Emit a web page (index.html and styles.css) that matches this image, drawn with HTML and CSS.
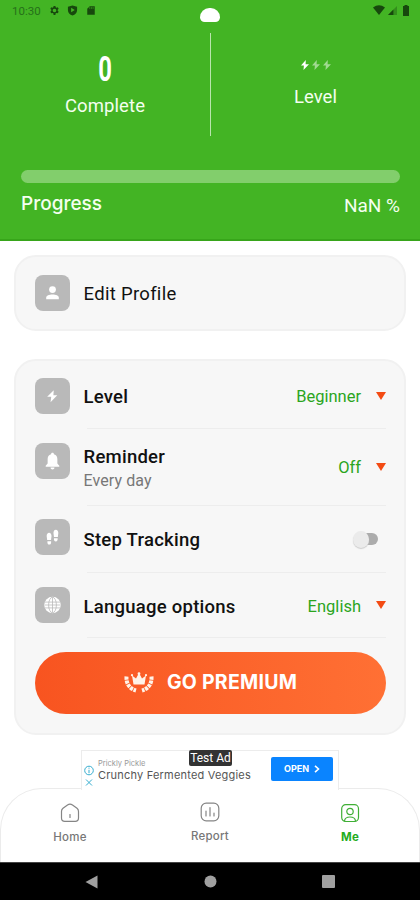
FILE: index.html
```html
<!DOCTYPE html>
<html lang="en">
<head>
<meta charset="utf-8">
<meta name="viewport" content="width=device-width, initial-scale=1">
<title>Me</title>
<link rel="stylesheet" href="styles.css">
</head>
<body>
<div class="phone">
  <header class="header">
    <div class="status">
      <span class="time">10:30</span>
      <svg class="st-icon" viewBox="0 0 24 24"><path fill-rule="evenodd" d="M10 2h4l.6 2.8 1.8 1 2.7-.9 2 3.5-2.1 1.9v2.4l2.1 1.9-2 3.5-2.7-.9-1.8 1L14 22h-4l-.6-3.800-1.800-1-2.700.9-2-3.500L5 12.700v-2.400L2.900 8.400l2-3.500 2.700.9 1.800-1zM12 8a4 4 0 1 0 0 8 4 4 0 0 0 0-8z"/></svg>
      <svg class="st-icon shield" viewBox="0 0 24 24"><path fill-rule="evenodd" d="M12 1l10 3v7c0 6-4 10-10 12C6 21 2 17 2 11V4zM9 6v10l8-5z"/></svg>
      <svg class="st-icon card-icon" viewBox="0 0 24 24"><path d="M9 2h12v20H3V8z"/><path class="slots" d="M9 4v4M13 4v4M17 4v4"/></svg>
      <span class="cutout"></span>
      <span class="st-right">
        <svg class="wifi" viewBox="0 0 12 10"><path d="M0 2.500Q6-2 12 2.500L6 10z"/></svg>
        <svg class="signal" viewBox="0 0 10 10"><path class="faint" d="M0 10L10 0v10z"/><path d="M0 10l6-6v6z"/></svg>
        <svg class="battery" viewBox="0 0 6 11"><path d="M0 1h1.500V0h3v1H6v10H0z"/></svg>
      </span>
    </div>
    <div class="stats">
      <div class="stat">
        <div class="count">0</div>
        <div class="stat-label complete">Complete</div>
      </div>
      <div class="rule"></div>
      <div class="stat">
        <div class="bolts">
          <svg viewBox="0 0 8 10"><path d="M4.800 0L0 5.600h2.900L2.500 10 8 4.200H4.600z"/></svg>
          <svg class="dim" viewBox="0 0 8 10"><path d="M4.800 0L0 5.600h2.900L2.500 10 8 4.200H4.600z"/></svg>
          <svg class="dim" viewBox="0 0 8 10"><path d="M4.800 0L0 5.600h2.900L2.500 10 8 4.200H4.600z"/></svg>
        </div>
        <div class="stat-label">Level</div>
      </div>
    </div>
    <div class="track"></div>
    <div class="progress"><span class="progress-name">Progress</span><span class="progress-value">NaN %</span></div>
  </header>

  <main class="main">
    <section class="card profile">
      <span class="tile"><svg viewBox="0 0 36 36"><circle cx="18" cy="14.500" r="3.500"/><path d="M11.500 24.500v-1.500c0-2.500 3-3.500 6.500-3.500s6.500 1 6.500 3.500v1.500z"/></svg></span>
      <span class="title edit">Edit Profile</span>
    </section>

    <section class="card settings">
      <div class="row level">
        <span class="tile"><svg viewBox="0 0 36 36"><path d="M19.300 12L12.500 18.700h4.200L16 24.500l6.900-7.200h-4z"/></svg></span>
        <span class="title">Level</span>
        <span class="value beginner">Beginner</span><i class="caret"></i>
      </div>
      <div class="row reminder">
        <span class="tile"><svg viewBox="0 0 36 36"><path d="M18 9.500c1 0 1.500.7 1.500 1.500 2.500.7 3.500 2.700 3.500 5v4.500l2 2.500v.8H11V23l2-2.500V16c0-2.300 1-4.300 3.500-5 0-.8.500-1.500 1.500-1.500zM16 24.800h4c0 1.500-1 2-2 2s-2-.5-2-2z"/></svg></span>
        <span class="title">Reminder<small>Every day</small></span>
        <span class="value">Off</span><i class="caret"></i>
      </div>
      <div class="row steps">
        <span class="tile"><svg viewBox="0 0 36 36"><path d="M12.500 21l-.5-4c0-2 1-3.500 2.500-3.500s2.500 1.300 2.500 3.500l-.5 4zM12.800 22.300h3.800c.2 2-.4 3.500-1.900 3.500s-2.200-1.500-1.900-3.500zM19.500 18l-.5-4c0-2.300 1-3.500 2.500-3.500S24 12 24 14l-.5 4zM19.500 19.200h3.800c.2 2-.4 3.300-1.900 3.300s-2.200-1.300-1.900-3.300z"/></svg></span>
        <span class="title">Step Tracking</span>
        <span class="switch"><i></i></span>
      </div>
      <div class="row language">
        <span class="tile"><svg viewBox="0 0 36 36"><circle cx="18" cy="18" r="8.500"/><g class="mesh"><ellipse cx="18" cy="18" rx="4" ry="8"/><path d="M18 10v16M10 15h16M10 21h16M10 18h16"/></g></svg></span>
        <span class="title">Language options</span>
        <span class="value english">English</span><i class="caret"></i>
      </div>
      <div class="premium">
        <svg viewBox="0 0 30 20"><path d="M9.500 12.500L8 3.500l4 3L15 1l3 5.500 4-3-1.500 9z"/><circle cx="15" cy="1.700" r="1.400"/><circle cx="8" cy="3.200" r="1.100"/><circle cx="22" cy="3.200" r="1.100"/><path class="laurel" d="M2.500 4.500C2 11 5 16.500 12 18.500M27.500 4.500C28 11 25 16.500 18 18.500"/></svg>
        <span>GO PREMIUM</span>
      </div>
    </section>

    <aside class="ad">
      <div class="ad-icons">
        <svg viewBox="0 0 10 10"><circle cx="5" cy="5" r="4.300"/><path d="M5 4.300v3.400M5 2.200v1"/></svg>
        <svg viewBox="0 0 10 10"><path d="M2 2l6 6M8 2L2 8"/></svg>
      </div>
      <div class="ad-text"><span class="brand">Prickly Pickle</span><span class="headline">Crunchy Fermented Veggies</span></div>
      <span class="test-ad">Test Ad</span>
      <div class="open">OPEN<svg viewBox="0 0 6 8"><path d="M1 .8L4.500 4 1 7.200"/></svg></div>
    </aside>
  </main>

  <nav class="nav">
    <div class="tab"><svg viewBox="0 0 20 20"><path d="M1.500 8.500Q1.500 6.500 3 5.300L7.500 2Q10 .3 12.500 2L17 5.300Q18.500 6.500 18.500 8.500V15q0 3.300-3.300 3.300H4.800Q1.500 18.300 1.500 15z"/><path d="M10 11.500v3"/></svg><span>Home</span></div>
    <div class="tab report"><svg viewBox="0 0 20 20"><rect x="1.200" y="1.200" width="17.600" height="17.600" rx="5"/><path d="M6 9v5M10 5.500V14M14 11v3"/></svg><span>Report</span></div>
    <div class="tab active"><svg viewBox="0 0 20 20"><rect x="1.700" y="1.700" width="16.800" height="16.800" rx="4"/><circle cx="10" cy="8.500" r="3.200"/><path d="M4.500 18c.3-3 2.500-4 5.500-4s5.200 1 5.500 4"/></svg><span>Me</span></div>
  </nav>
  <div class="system">
    <svg viewBox="0 0 14 14"><path d="M.5 7L12.500.5v13z"/></svg>
    <svg viewBox="0 0 14 14"><circle cx="7.500" cy="6.500" r="6"/></svg>
    <svg viewBox="0 0 14 14"><rect x="1" y="0" width="13" height="13" rx="1"/></svg>
  </div>
</div>
</body>
</html>
```
FILE: styles.css
```css
* { box-sizing: border-box; }
body { margin: 0; background: #fff; font-family: Roboto, sans-serif; }
svg { display: block; flex: none; overflow: visible; }
.phone { width: 420px; height: 900px; display: flex; flex-direction: column; overflow: hidden; }

.header { height: 241px; flex: none; background: #43b424; border-bottom: 2px solid #37a51a; color: #f4fff0; }
.status { height: 22px; padding: 0 11px 0 12px; display: flex; align-items: center; position: relative; }
.status svg { fill: #17480d; }
.time { width: 37px; font-size: 11.5px; line-height: 21px; color: #26701a; }
.st-icon { width: 11px; height: 11px; margin-top: -2px; }
.shield, .card-icon { margin-left: 7px; }
.card-icon { width: 10px; margin-left: 8px; }
.slots { stroke: #43b424; stroke-width: 1.5; }
.cutout { position: absolute; left: 200px; top: 8px; width: 20px; height: 14px; background: #fff; border-radius: 10px 10px 5px 5px; }
.st-right { margin-left: auto; display: flex; align-items: center; gap: 3px; margin-top: -2px; }
.wifi { width: 12px; height: 10px; }
.signal { width: 9px; height: 9px; }
.signal .faint { opacity: .35; }
.battery { width: 6px; height: 11px; margin-left: 3px; }

.stats { height: 148px; display: grid; grid-template-columns: 210px 1px 209px; }
.stat { text-align: center; }
.rule { height: 103px; margin-top: 11px; background: #b9e5ad; }
.count { margin-top: 30px; height: 36px; font-size: 35px; line-height: 36px; font-weight: 700; color: #fff; transform: scaleX(.68); }
.stat-label { font-size: 18.5px; line-height: 24px; }
.complete { margin-top: 6px; letter-spacing: .1px; }
.bolts { display: flex; justify-content: center; gap: 3px; margin-top: 38px; margin-bottom: 15px; }
.bolts svg { width: 8px; height: 10px; fill: #fff; }
.bolts .dim { opacity: .5; }
.track { height: 13px; margin: 0 20px 0 21px; border-radius: 7px; background: #82ce6c; }
.progress { display: flex; justify-content: space-between; padding: 0 20px 0 21px; }
.progress-name { font: 500 19px/24px Inter, sans-serif; margin-top: 9px; }
.progress-value { font-size: 19px; line-height: 24px; margin-top: 11px; }

.main { height: 547px; flex: none; padding: 14px 14px 0; display: flex; flex-direction: column; }
.card { flex: none; background: #f7f7f7; border: 2px solid #f1f1f1; border-radius: 22px; padding: 0 18px 0 19px; }
.profile { height: 76px; display: flex; align-items: center; }
.settings { height: 376px; margin-top: 28px; }
.row { display: flex; align-items: flex-start; position: relative; }
.row::after { content: ""; position: absolute; left: 52px; right: 0; bottom: 0; height: 1px; background: #ededed; }
.tile { width: 35px; height: 36px; flex: none; margin-right: 13.5px; border-radius: 8px; background: #b9b9b9; }
.tile svg { width: 35px; height: 36px; fill: #fff; }
.mesh { fill: none; stroke: #b9b9b9; stroke-width: .8; }
.title { font-size: 18.5px; line-height: 24px; font-weight: 500; letter-spacing: .25px; color: #111; margin-top: 7px; }
.edit { margin-top: 2px; font-weight: 400; letter-spacing: .3px; }
.title small { display: block; font-size: 16px; line-height: 23px; font-weight: 400; letter-spacing: 0.1px; color: #777; }
.value { margin-left: auto; margin-top: 7px; font-size: 16.5px; line-height: 24px; color: #2ba51d; }
.caret { margin: 14px 0 0 15px; border: 5px solid transparent; border-top: 8px solid #f34b13; border-bottom: 0; }
.level { height: 68px; padding-top: 17px; }
.reminder { height: 77px; padding-top: 14px; }
.reminder .title { margin-top: 2px; }
.reminder .value { margin-top: 13px; }
.reminder .caret { margin-top: 20px; }
.steps { height: 67px; padding-top: 13px; }
.steps .title { margin-top: 9px; }
.switch { position: relative; width: 25px; height: 12px; margin: 14px 8px 0 auto; }
.switch::before { content: ""; position: absolute; left: 5px; right: 0; top: 0; height: 12px; border-radius: 6px; background: #acacac; }
.switch i { position: absolute; left: 0; top: -2px; width: 16px; height: 17px; border-radius: 50%; background: #ebebeb; box-shadow: 0 1px 1px #ccc; }
.language { height: 65px; padding-top: 14px; }
.language .title, .language .value { margin-top: 8px; }
.premium { margin-top: 14px; height: 62px; border-radius: 31px; background: linear-gradient(90deg, #f85420, #ff7034); display: flex; align-items: center; justify-content: center; color: #fff; font: 700 19.5px/24px Inter, sans-serif; letter-spacing: .25px; gap: 13px; padding-bottom: 3px; }
.premium svg { width: 30px; height: 20px; fill: #fff3e8; }
.laurel { fill: none; stroke: #fff3e8; stroke-width: 4; stroke-dasharray: 3.200 .8; }

.ad { width: 258px; height: 40px; flex: none; margin: 15px 0 0 67px; border: 1px solid #ececec; border-bottom: 0; display: flex; position: relative; background: #fff; }
.ad-icons { width: 16px; padding: 14px 0 0 2px; }
.ad-icons svg { width: 10px; height: 11px; margin-bottom: 1px; fill: none; stroke: #37aed0; stroke-width: 1; }
.ad-text { font-family: Inter, sans-serif; display: flex; flex-direction: column; padding-top: 8px; white-space: nowrap; }
.brand { font-size: 7.500px; line-height: 9px; color: #999; }
.headline { font-size: 11px; line-height: 14px; color: #555; letter-spacing: .2px; }
.test-ad { position: absolute; left: 107px; top: -1px; width: 43px; height: 16px; background: #333; border-radius: 2px; color: #fff; font-size: 12px; line-height: 16px; text-align: center; }
.open { width: 62px; height: 24px; margin: 6px 5px 0 auto; display: flex; align-items: center; justify-content: center; gap: 5px; background: #0a84ff; border-radius: 2px; color: #fff; font: 700 9px/12px Inter, sans-serif; }
.open svg { width: 6px; height: 8px; fill: none; stroke: #fff; stroke-width: 1.600; }

.nav { height: 74px; flex: none; background: #fff; border: 1px solid #ebebeb; border-bottom: 0; border-radius: 42px 42px 0 0; display: grid; grid-template-columns: repeat(3, 140px); justify-content: center; font: 500 11.5px/14px Inter, sans-serif; letter-spacing: .2px; color: #777; }
.tab { display: flex; flex-direction: column; align-items: center; gap: 7px; padding-top: 14px; }
.report { padding-top: 13px; }
.tab svg { width: 20px; height: 20px; fill: none; stroke: #858585; stroke-width: 1.200; stroke-linecap: round; }
.active { color: #25ac1d; font-weight: 700; }
.active svg { stroke: #3faf35; }
.system { height: 38px; flex: none; background: #000; border-top: 1px solid #444; display: grid; grid-template-columns: 118px 118px 118px; justify-content: center; justify-items: center; align-items: center; }
.system svg { width: 14px; height: 14px; fill: #a0a0a0; }
```
